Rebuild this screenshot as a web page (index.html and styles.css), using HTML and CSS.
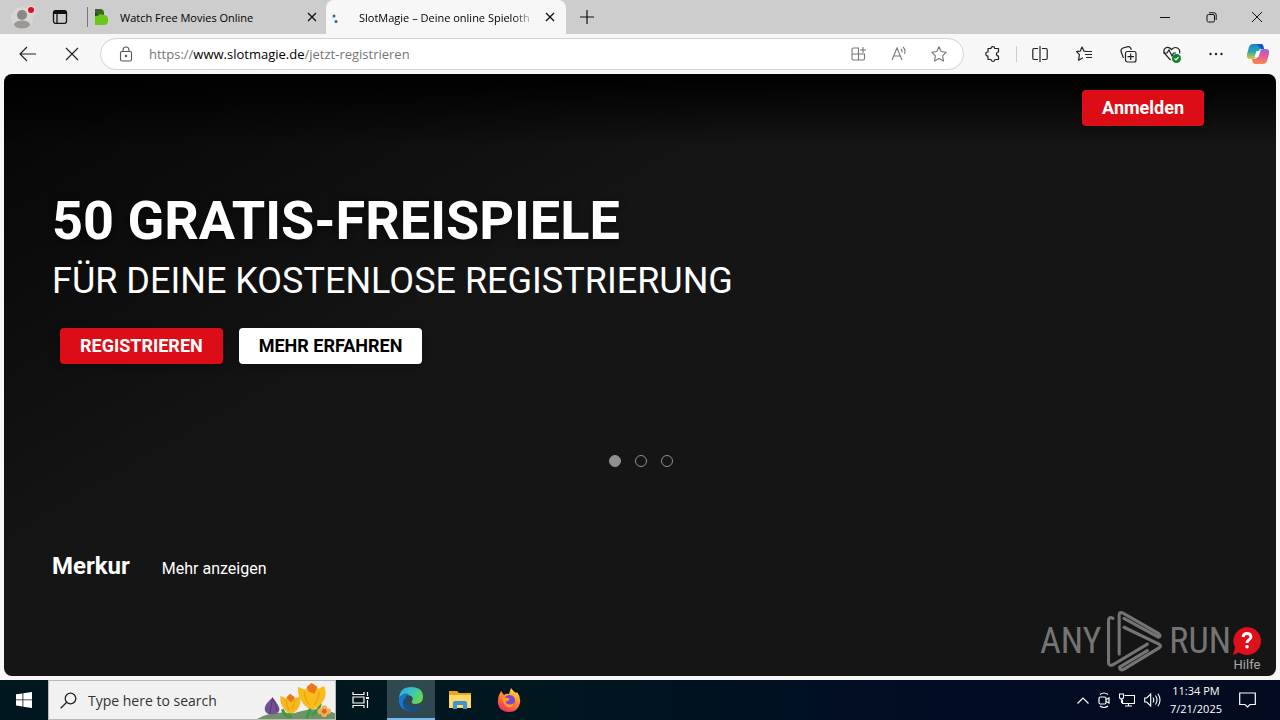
FILE: index.html
```html
<!DOCTYPE html>
<html lang="de">
<head>
<meta charset="utf-8">
<meta name="viewport" content="width=device-width, initial-scale=1">
<title>SlotMagie – Deine online Spielothek</title>
<link rel="stylesheet" href="styles.css">
</head>
<body>
<header class="tabbar">
  <button class="profile" aria-label="Profile">
    <svg width="24" height="26" viewBox="0 0 24 26"><circle cx="11" cy="14" r="11" fill="#d8d5d2"/><circle cx="11" cy="11" r="5" fill="#8b8785"/><ellipse cx="11" cy="20.500" rx="8" ry="4" fill="#9b9795"/><circle cx="20" cy="6" r="4.500" fill="#e9d5d5"/><circle cx="20" cy="6" r="3" fill="#d5101d"/></svg>
  </button>
  <button class="workspaces" aria-label="Tab actions">
    <svg width="16" height="16" viewBox="0 0 16 16" fill="none" stroke="#111" stroke-width="1.300"><rect x="1.500" y="1.700" width="13" height="12.600" rx="2"/><path d="M2 3.500h12" stroke-width="3"/><path d="M5 4v10"/></svg>
  </button>
  <div class="tab">
    <svg class="favicon" width="16" height="16" viewBox="0 0 16 16"><path d="M1 0h5q4 0 4 4v3H1z" fill="#3d6428"/><path d="M1 6l4-1 6 1q3 1 3 4v2q0 4-4 4H1z" fill="#6dc61c"/><path d="M1 4l5 2-5 1z" fill="#23451e"/></svg>
    <span class="tab-title">Watch Free Movies Online</span>
    <button class="close" aria-label="Close tab"><svg width="10" height="10" viewBox="0 0 10 10" stroke="#111" stroke-width="1.300"><path d="M1 1l8 8M9 1L1 9"/></svg></button>
  </div>
  <div class="tab tab-active">
    <svg class="favicon" width="16" height="16" viewBox="0 0 16 16" fill="#286a96"><circle cx="6" cy="7" r="1.500"/><circle cx="8" cy="12.500" r="1.500"/><circle cx="4.500" cy="9.500" r=".6" fill="#acd"/></svg>
    <span class="tab-title fade">SlotMagie – Deine online Spieloth</span>
    <button class="close" aria-label="Close tab"><svg width="10" height="10" viewBox="0 0 10 10" stroke="#111" stroke-width="1.300"><path d="M1 1l8 8M9 1L1 9"/></svg></button>
  </div>
  <button class="new-tab" aria-label="New tab"><svg width="14" height="14" viewBox="0 0 14 14" stroke="#111" stroke-width="1.200"><path d="M7 0v14M0 7h14"/></svg></button>
  <div class="window-controls">
    <button aria-label="Minimize"><svg width="10" height="10" viewBox="0 0 10 10" stroke="#111"><path d="M0 5.500h10"/></svg></button>
    <button aria-label="Restore"><svg width="11" height="11" viewBox="0 0 11 11" fill="none" stroke="#111"><rect x="1" y="2.500" width="7.500" height="7.500" rx="1.500"/><path d="M3 .8h5q2.200 0 2.200 2.200v5"/></svg></button>
    <button aria-label="Close"><svg width="10" height="10" viewBox="0 0 10 10" stroke="#111"><path d="M0 0l10 10M10 0L0 10"/></svg></button>
  </div>
</header>

<nav class="toolbar">
  <button class="nav-btn" aria-label="Back"><svg width="18" height="16" viewBox="0 0 18 16" fill="none" stroke="#222" stroke-width="1.200"><path d="M8 1L1 8l7 7M1 8h16"/></svg></button>
  <button class="nav-btn" aria-label="Stop"><svg width="14" height="14" viewBox="0 0 14 14" stroke="#222" stroke-width="1.200"><path d="M1 1l12 12M13 1L1 13"/></svg></button>
  <div class="address">
    <button class="addr-btn" aria-label="Site information"><svg width="14" height="16" viewBox="0 0 14 16" fill="none" stroke="#555" stroke-width="1.100"><rect x="1.500" y="5.500" width="11" height="9.500" rx="1.500"/><path d="M4 5.500V4q0-3 3-3t3 3v1.500"/><circle cx="7" cy="10" r=".7" fill="#555"/></svg></button>
    <span class="url"><span class="dim">https://</span>www.slotmagie.de<span class="dim">/jetzt-registrieren</span></span>
    <button class="addr-btn" aria-label="Apps"><svg width="16" height="16" viewBox="0 0 16 16" fill="none" stroke="#777" stroke-width="1.100"><path d="M8 2H2.500Q1 2 1 3.500v9Q1 14 2.500 14h9.500q1.500 0 1.500-1.500V8H1M7.500 2v12M12 1v6M9 4h6"/></svg></button>
    <button class="addr-btn" aria-label="Read aloud"><svg width="16" height="16" viewBox="0 0 16 16" fill="none" stroke="#777" stroke-width="1.100"><path d="M1 14L6 2l5 12M3 10h6.500M10 3q1.500 1.500 1 3.500M12 1q3 3 1.500 7"/></svg></button>
    <button class="addr-btn" aria-label="Favorite"><svg width="16" height="16" viewBox="0 0 16 16" fill="none" stroke="#777" stroke-width="1.100" stroke-linejoin="round"><path d="M8 .8l2.200 4.700 5.100.7-3.700 3.600.9 5.100L8 12.500l-4.500 2.400.9-5.100L.7 6.200l5.100-.7z"/></svg></button>
  </div>
  <div class="tools">
    <button aria-label="Extensions"><svg width="16" height="16" viewBox="0 0 16 16" fill="none" stroke="#222" stroke-width="1.200" stroke-linejoin="round"><path d="M3 2.500h3Q6 .7 7.800.7T9.700 2.500h3.800V6q-2 0-2 2t2 2v3.500H10q-.2 1.800-2 1.800t-2-1.800H3V10Q.8 10 .8 8T3 6z"/></svg></button>
    <i class="divider"></i>
    <button aria-label="Split screen"><svg width="16" height="16" viewBox="0 0 16 16" fill="none" stroke="#222" stroke-width="1.200"><path d="M6 2.500H2Q.8 2.500.8 4v8q0 1.500 1.200 1.500h4M10 2.500h4q1.200 0 1.200 1.500v8q0 1.500-1.200 1.500h-4M8 0v16"/></svg></button>
    <button aria-label="Favorites"><svg width="17" height="16" viewBox="0 0 17 16" fill="none" stroke="#222" stroke-width="1.200" stroke-linejoin="round"><path d="M16 5.500H10L8 5.200 6 1 4.200 5.200.5 5.700l2.900 3L2.600 14.200 7 11.800M9 8.500h7M10 11.500h6"/></svg></button>
    <button aria-label="Collections"><svg width="17" height="17" viewBox="0 0 17 17" fill="none" stroke="#222" stroke-width="1.200"><rect x="5.500" y="5.500" width="10.500" height="10.500" rx="2"/><path d="M3.500 12L1 5.500Q.5 3 3 2l5-1.300q2-.3 2.700 1.500l.8 1.500M10.700 7.500v6.500M7.500 10.700H14"/></svg></button>
    <button aria-label="Browser essentials"><svg width="18" height="17" viewBox="0 0 18 17" fill="none" stroke="#222" stroke-width="1.200"><path d="M7.500 14L2 8Q-.5 4 2.500 2t6 1.500q3-3 6-1.500t2 5.500M0 7h4l2-3 3 6 1.500-3H13"/><circle cx="13.500" cy="12.500" r="4.500" fill="#12812b" stroke="none"/><path d="M11.500 12.500l1.500 1.500 2.500-2.800" stroke="#fff"/></svg></button>
    <button aria-label="Settings"><svg width="14" height="4" viewBox="0 0 14 4" fill="#222"><circle cx="1.500" cy="2" r="1.200"/><circle cx="7" cy="2" r="1.200"/><circle cx="12.500" cy="2" r="1.200"/></svg></button>
    <button aria-label="Copilot"><svg width="22" height="20" viewBox="0 0 22 20">
      <defs><linearGradient id="ca" x1="0" y1="0" x2="0" y2="1"><stop offset="0" stop-color="#1684d4"/><stop offset=".5" stop-color="#27a8b5"/><stop offset="1" stop-color="#e3cb24"/></linearGradient><linearGradient id="cb" x1="0" y1="0" x2="0" y2="1"><stop offset="0" stop-color="#9b65e4"/><stop offset=".5" stop-color="#e95994"/><stop offset="1" stop-color="#f68c45"/></linearGradient></defs>
      <path d="M6 0h8q2 0 2.500 3l.5 2h-3q-2 0-3 3l-2 5q-1 2-3 2H3q-4 0-3-5l2-7q1-3 4-3z" fill="url(#ca)"/><path d="M16 20H8q-2 0-2.500-3L5 15h3q2 0 3-3l2-5q1-2 3-2h3q4 0 3 5l-2 7q-1 3-4 3z" fill="url(#cb)"/><path d="M10 0h4q2 0 2.500 3l.5 2h-3z" fill="#1853c4"/><path d="M9.500 7h4l-2 6h-4z" fill="#fff"/></svg></button>
  </div>
</nav>

<main class="page">
  <div class="site-header"><button class="btn btn-red">Anmelden</button></div>
  <section class="hero">
    <h1>50 GRATIS-FREISPIELE</h1>
    <p class="subtitle">FÜR DEINE KOSTENLOSE REGISTRIERUNG</p>
    <div class="actions"><button class="btn btn-red">REGISTRIEREN</button><button class="btn btn-white">MEHR ERFAHREN</button></div>
  </section>
  <div class="dots"><button class="dot dot-on" aria-label="Slide 1"></button><button class="dot" aria-label="Slide 2"></button><button class="dot" aria-label="Slide 3"></button></div>
  <section class="category"><h2>Merkur</h2><a href="#merkur">Mehr anzeigen</a></section>
  <div class="watermark">
    <span>ANY</span>
    <svg width="62" height="66" viewBox="22 14 180 192" fill="none" stroke="#747474" stroke-width="9" stroke-linecap="round" stroke-linejoin="round"><path d="M48 44Q35 38 35 50V174Q36 184 48 179L148 119M66 148V34Q66 23 77 29L180 88Q190 96 180 99L80 44M80 70L183 120Q190 125 182 130L80 192Q68 198 67 186L148 138"/></svg>
    <span>RUN</span>
  </div>
  <button class="help"><svg width="28" height="29" viewBox="0 0 28 29"><path d="M14 0a14 14 0 1 1-8 25.500L0 28l2-7.500A14 14 0 0 1 14 0z" fill="#de101b"/><path d="M10 10q.5-3.500 4-3.500t4 3.300q0 2-2.300 3.200-1.700 1-1.700 3" fill="none" stroke="#fff" stroke-width="2.800"/><circle cx="14" cy="19.800" r="1.800" fill="#fff"/></svg><span>Hilfe</span></button>
</main>

<footer class="taskbar">
  <button class="start" aria-label="Start"><svg width="16" height="16" viewBox="0 0 16 16" fill="#fff"><path d="M0 2.300l6.500-.9v6.100H0zM7.300 1.300L16 0v7.500H7.300zM0 8.300h6.500v6.200L0 13.600zM7.300 8.300H16V16l-8.700-1.300z"/></svg></button>
  <div class="search">
    <svg width="17" height="17" viewBox="0 0 17 17" fill="none" stroke="#222" stroke-width="1.300"><circle cx="10.500" cy="6.500" r="5.300"/><path d="M6.700 10.300L.7 16.300"/></svg>
    <input type="text" placeholder="Type here to search" aria-label="Type here to search">
    <svg class="flowers" width="78" height="37" viewBox="0 0 80 38"><path d="M0 38Q14 29 38 32q24-8 42 0v6z" fill="#6f9367"/><path d="M16 16q8 10 7 13-2 5-9 4-7 0-6-7 1-4 8-10z" fill="#765096"/><path d="M16 16l-3 17M17 18l4 12" stroke="#52366f"/><path d="M34 24v13M57 20L51 38M56 34q8-5 9-12M33 36q-5-1-7-8" stroke="#409a42" stroke-width="3" fill="none"/><path d="M24 14l6 3 4-5 4 5 6-2q2 8-3 14-7 7-13-1-5-6-4-14z" fill="#f6b91d"/><path d="M42 5l7 3 7-6 7 5 6-3q4 11-3 18-9 11-18 1-7-8-6-18z" fill="#f9bd1a"/><path d="M51 5l5-4 6 4-3 7-6-2zM30 16l4-4 5 4-4 5z" fill="#ed751b"/><path d="M49 10q-1 9 6 14M64 10q-1 8-5 14M30 18q0 7 3 11M39 18q-1 6-3 10" fill="none" stroke="#e59a12" stroke-width="1"/><g fill="#f3ae55"><circle cx="69" cy="27" r="3"/><circle cx="73" cy="30" r="3"/><circle cx="69" cy="33" r="3"/><circle cx="65" cy="30" r="3"/></g><circle cx="69" cy="30" r="2.500" fill="#df6720"/></svg>
  </div>
  <button class="task" aria-label="Task view"><svg width="18" height="16" viewBox="0 0 18 16" fill="none" stroke="#fff" stroke-width="1.200"><path d="M1 0v2.500h11V0M1 16v-2.500h11V16M1 5h11v6H1zM15.500 0v4M15.500 8v8"/><path d="M14 6h3" stroke-width="2"/></svg></button>
  <button class="task task-active" aria-label="Microsoft Edge"><svg width="26" height="26" viewBox="0 0 26 26"><defs><linearGradient id="eg" x1="0" y1="0" x2="1" y2=".5"><stop stop-color="#2ba9df"/><stop offset=".6" stop-color="#3bc7b6"/><stop offset="1" stop-color="#6bd64e"/></linearGradient></defs><path d="M1 12Q2 1 13 1q12 0 12 10 0 7-8 7-4 0-3-3 2-3-1-5Q6 6 1 12z" fill="url(#eg)"/><path d="M1 12q4-6 10-4-5 3-4 8 2 7 10 6 4 0 7-3-5 7-13 6Q0 23 1 12z" fill="#1477c9"/><path d="M9 11q-4 4 0 9 5 4 15-1-5 7-12 6-8-2-7-9 1-4 4-5z" fill="#104f94"/></svg></button>
  <button class="task" aria-label="File Explorer"><svg width="22" height="20" viewBox="0 0 22 20"><path d="M0 1h8l2 2h12v15H0z" fill="#e8a824"/><path d="M0 5h22v13H0z" fill="#ffd869"/><path d="M4 19v-6q0-2 2-2h10q2 0 2 2v6h-4v-4H8v4z" fill="#3b95d5"/></svg></button>
  <button class="task" aria-label="Firefox"><svg width="24" height="24" viewBox="0 0 24 24"><defs><linearGradient id="fx" x1=".8" y1="0" x2=".3" y2="1"><stop stop-color="#ffe83f"/><stop offset=".5" stop-color="#ff8329"/><stop offset="1" stop-color="#f02d65"/></linearGradient></defs><path d="M4 3l3 4q2-2 5-1l2-6q2 3 5 5l1-1q4 5 3 11-2 9-11 9T1 16Q0 9 4 3z" fill="url(#fx)"/><circle cx="12.500" cy="12.500" r="5.500" fill="#7748d3"/><path d="M5 9l6 1q3 1 0 3-3 0-2 2 4 3 8 0-1 5-6 4-5-2-6-10z" fill="#ff9c22"/></svg></button>
  <div class="tray">
    <svg width="12" height="7" viewBox="0 0 12 7" fill="none" stroke="#fff" stroke-width="1.200"><path d="M.5 6.500L6 1l5.500 5.500"/></svg>
    <svg width="12" height="16" viewBox="0 0 12 16" fill="none" stroke="#fff" stroke-width="1.200"><rect x="1" y="5" width="7" height="7" rx="1.500"/><path d="M8 7.500l3-1.500v5L8 9.500M2 2.500Q6-.5 10 2.500M2 14q4 3 8 0"/></svg>
    <svg width="16" height="14" viewBox="0 0 16 14" fill="none" stroke="#fff" stroke-width="1.100"><path d="M5.500 2.500h10v8h-12V7M6 13h7M9.500 10.500V13M.5 1h4v3q0 2-2 2t-2-2zM2.500 6v4"/></svg>
    <svg width="17" height="14" viewBox="0 0 17 14" fill="none" stroke="#fff" stroke-width="1.100"><path d="M.7 5h2l4-4v12l-4-4h-2zM9 4.500q1.500 2.500 0 5M11.500 2.500q3 4.500 0 9M14 .8q4 6.200 0 12.400"/></svg>
    <time class="clock"><span>11:34 PM</span><span>7/21/2025</span></time>
    <svg width="17" height="16" viewBox="0 0 17 16" fill="none" stroke="#fff" stroke-width="1.200"><path d="M.7 1h15.600v11.500h-5.300L8.500 15 6 12.500H.7z"/></svg>
  </div>
</footer>
</body>
</html>
```
FILE: styles.css
```css
* { box-sizing: border-box; }
body {
  margin: 0;
  min-height: 100vh;
  display: flex;
  flex-direction: column;
  background: #f7f7f7;
  font-family: "Open Sans", "Noto Sans", sans-serif;
  color: #111;
}
button { border: 0; padding: 0; background: none; font: inherit; color: inherit; display: flex; align-items: center; justify-content: center; }
svg { display: block; flex: none; }

.tabbar { display: flex; align-items: center; height: 34px; background: #cdcdcd; }
.profile { margin-left: 11px; width: 24px; }
.workspaces { width: 50px; }
.tab { width: 239px; height: 34px; display: flex; align-items: center; gap: 10px; padding: 0 9px 0 7px; font-size: 11px; color: #000; }
.tab:not(.tab-active) { position: relative; margin-left: 2px; }
.tab:not(.tab-active)::before { content: ""; position: absolute; left: 0; top: 7px; width: 1px; height: 20px; background: #777; }
.tab-title { flex: 1; white-space: nowrap; }
.fade { margin-left: 5px; mask-image: linear-gradient(to right, #000 88%, transparent); }
.tab-active { width: 240px; background: #f7f7f7; border-radius: 8px 8px 0 0; padding-left: 2px; padding-right: 11px; }
.tab .close { width: 10px; }
.new-tab { width: 42px; height: 34px; }
.window-controls { display: flex; margin-left: auto; }
.window-controls button { width: 46px; height: 34px; }

.toolbar { display: flex; align-items: center; height: 40px; padding: 0 2px 0 6px; }
.nav-btn { width: 44px; height: 32px; }
.address { flex: 1; display: flex; align-items: center; height: 32px; margin-left: 6px; padding: 0 4px 0 5px; background: #fff; border: 1px solid #d2d2d2; border-radius: 16px; }
.addr-btn { width: 40px; height: 30px; }
.url { flex: 1; padding-left: 3px; font-size: 13px; white-space: nowrap; color: #000; }
.dim { color: #767676; }
.tools { display: flex; align-items: center; margin-left: 7px; }
.tools button { width: 44px; height: 32px; }
.tools button:last-child { width: 40px; }
.divider { width: 1px; height: 16px; margin: 0 1px; background: #ccc; }

.page {
  position: relative;
  flex: 1;
  margin: 0 4px 4px;
  border-radius: 8px;
  overflow: hidden;
  color: #fff;
  font-family: Roboto, sans-serif;
  background:
    linear-gradient(to bottom, #000, transparent 72px),
    linear-gradient(150deg, rgba(0, 0, 0, .75), transparent 440px),
    #151515;
}
.site-header { display: flex; justify-content: flex-end; padding: 16px 72px 0; }
.btn { height: 36px; padding: 0 20px 2px; border-radius: 4px; font-size: 18px; font-weight: 700; box-shadow: 0 2px 8px rgba(0, 0, 0, .3); }
.btn-red { background: #dc0d16; }
.btn-white { background: #fff; color: #000; }
.hero { padding: 61px 48px 0; }
.hero h1 { margin: 0; font-size: 54px; line-height: 68px; font-weight: 700; text-shadow: 0 2px 6px rgba(0, 0, 0, .5); }
.subtitle { margin: 0; font-size: 36px; line-height: 52px; }
.actions { display: flex; gap: 16px; padding: 21px 8px 0; }
.dots { display: flex; justify-content: center; gap: 14px; padding: 91px 0 0 2px; }
.dot { width: 12px; height: 12px; border: 1px solid #909090; border-radius: 50%; }
.dot-on { background: #909090; }
.category { display: flex; align-items: baseline; gap: 32px; padding: 83px 48px 0; }
.category h2 { margin: 0; font-size: 24px; line-height: 32px; }
.category a { color: #fff; font-size: 16px; text-decoration: none; }
.watermark { position: absolute; right: 45px; bottom: 2px; display: flex; align-items: center; gap: 3px; color: #747474; font: 36px/64px "Liberation Sans Narrow", "Roboto Condensed", Roboto, sans-serif; }
.help { position: absolute; right: 15px; bottom: 3px; flex-direction: column; color: #aaa; font-size: 13px; line-height: 17px; }

.taskbar { display: flex; height: 40px; background: linear-gradient(to right, #00171f 40%, #020c24 75%, #030b20); color: #fff; }
.start { width: 48px; }
.search { position: relative; width: 288px; display: flex; align-items: center; gap: 11px; padding-left: 11px; background: #f1f1f1; border: 1px solid #b9b9b9; }
.search input { flex: 1; min-width: 0; padding: 0; border: 0; outline: 0; background: none; font: 14px "Open Sans", sans-serif; }
.search input::placeholder { color: #333; opacity: 1; }
.flowers { position: absolute; right: 0; bottom: 0; }
.task { width: 48px; margin-left: 1px; }
.task-active { margin-left: 2px; background: #304850; border-bottom: 2px solid #76b9ed; }
.tray { display: flex; align-items: center; gap: 9px; margin-left: auto; padding-right: 24px; }
.clock { display: flex; flex-direction: column; align-items: center; font-size: 11px; line-height: 18px; }
.clock + svg { margin-left: 8px; }
```
